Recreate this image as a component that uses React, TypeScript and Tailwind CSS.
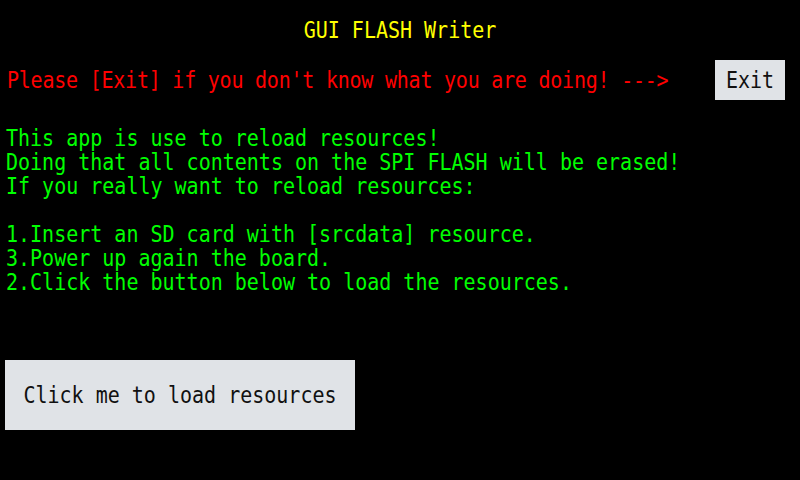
export default function App() {
  const mono = { fontFamily: '"DejaVu Sans Mono", monospace' };
  const Line = ({ children, className = "" }: { children?: React.ReactNode; className?: string }) => (
    <div className={`h-[24px] leading-[24px] whitespace-pre scale-y-[1.16] ${className}`}>{children}</div>
  );
  return (
    <div className="w-[800px] h-[480px] bg-black text-[20px] overflow-hidden" style={mono}>
      <div className="pt-[18px] flex justify-center text-[#ffff00]">
        <Line>GUI FLASH Writer</Line>
      </div>
      <div className="mt-[18px] flex items-center justify-between pl-[7px] pr-[15px]">
        <div className="text-[#ff0000] tracking-[-0.23px]">
          <Line>{"Please [Exit] if you don't know what you are doing! --->"}</Line>
        </div>
        <button className="w-[70px] h-[40px] bg-[#e0e3e7] text-[#111111] flex items-center justify-center">
          <Line>Exit</Line>
        </button>
      </div>
      <div className="mt-[26px] pl-[6px] text-[#00ff00]">
        <Line>This app is use to reload resources!</Line>
        <Line>Doing that all contents on the SPI FLASH will be erased!</Line>
        <Line>If you really want to reload resources:</Line>
        <Line>{" "}</Line>
        <Line>1.Insert an SD card with [srcdata] resource.</Line>
        <Line>3.Power up again the board.</Line>
        <Line>2.Click the button below to load the resources.</Line>
      </div>
      <div className="mt-[66px] pl-[5px]">
        <button className="w-[350px] h-[70px] bg-[#e0e3e7] text-[#111111] flex items-center justify-center">
          <Line>Click me to load resources</Line>
        </button>
      </div>
    </div>
  );
}
